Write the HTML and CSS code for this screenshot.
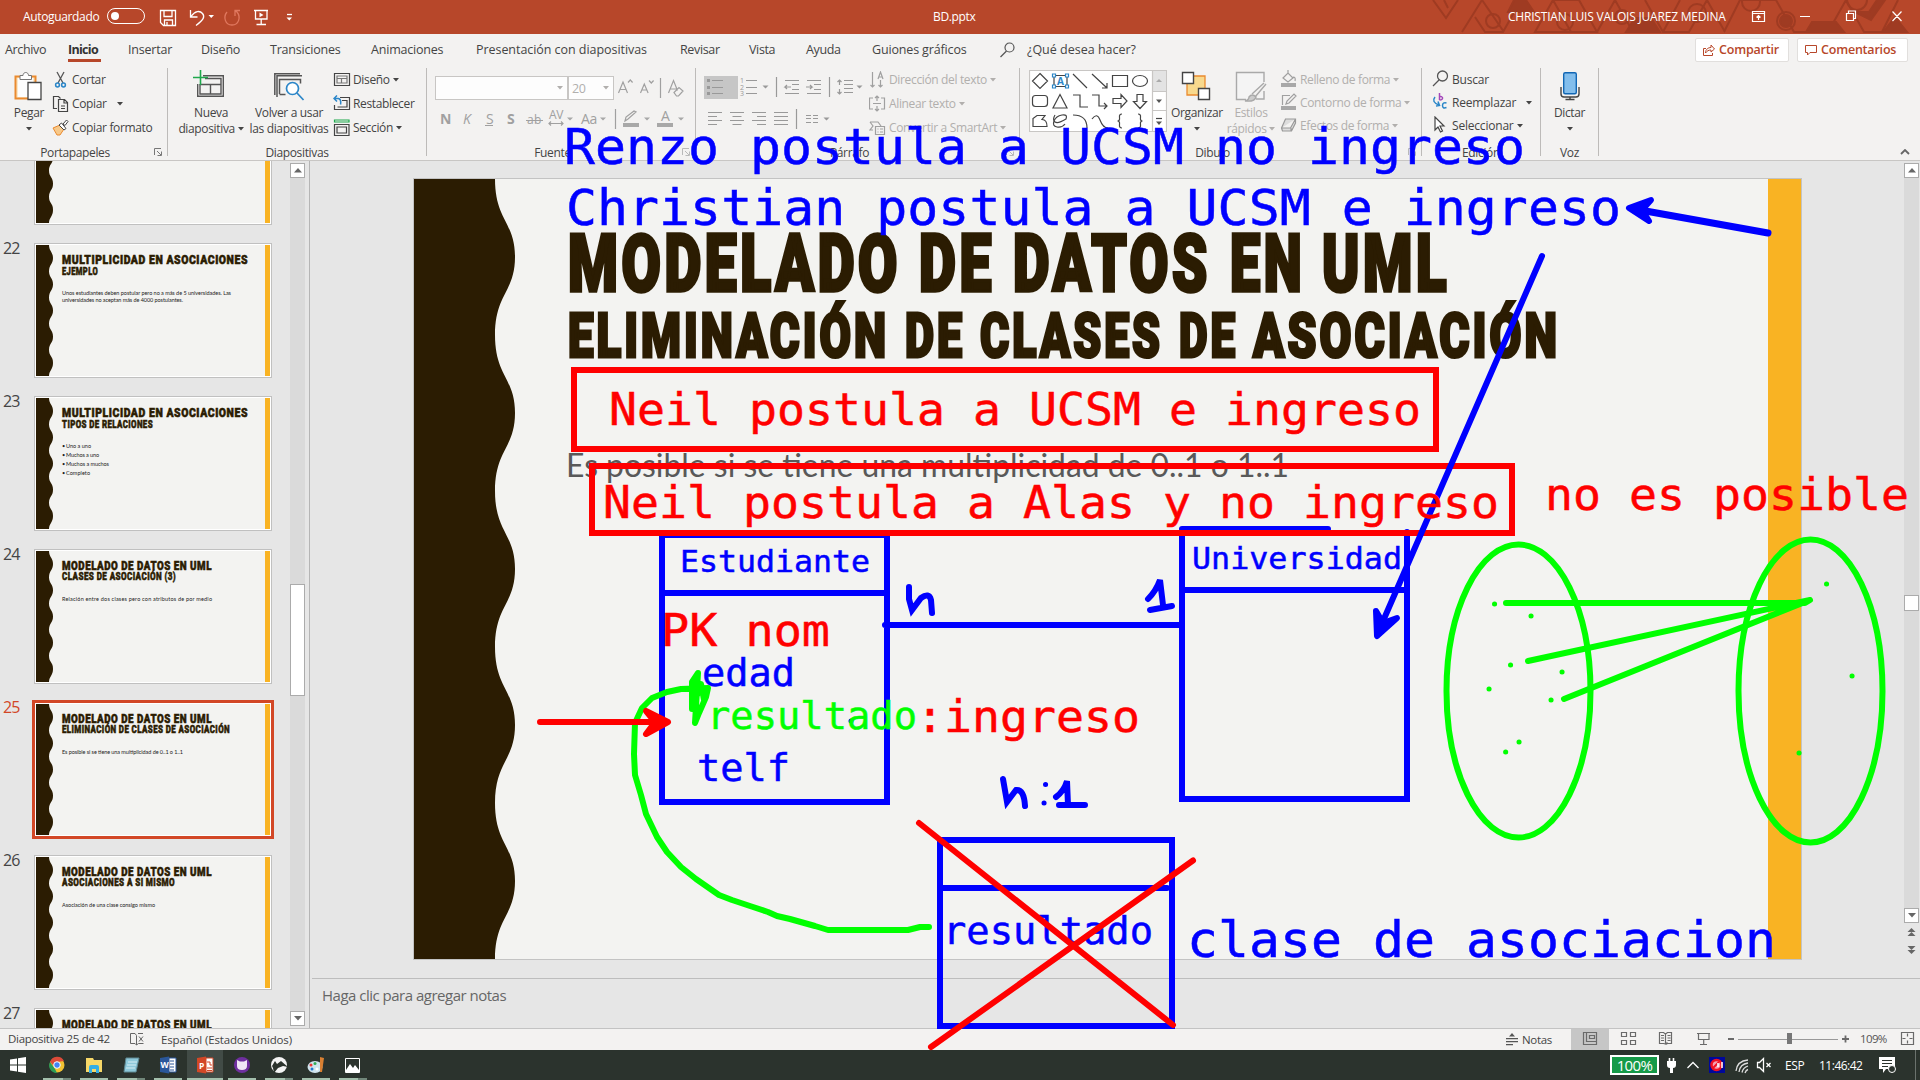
FILE: index.html
```html
<!DOCTYPE html>
<html lang="es">
<head>
<meta charset="utf-8">
<title>BD.pptx</title>
<link rel="stylesheet" href="styles.css">
</head>
<body>
<svg class="defs" width="0" height="0">
  <defs>
    <symbol id="thumb-bg" viewBox="0 0 234 131" preserveAspectRatio="none">
      <rect width="234" height="131" fill="#f3f3f1"/>
      <path d="M0 0H13C13 6 17 7 17 13.1S13 20 13 26.2S17 33 17 39.3S13 46 13 52.4S17 59 17 65.5S13 72 13 78.6S17 85 17 91.7S13 98 13 104.8S17 111 17 117.9S13 125 13 131H0Z" fill="#2b1c02"/>
      <rect x="229" width="5" height="131" fill="#f9b323"/>
    </symbol>
    <symbol id="caret" viewBox="0 0 6 4"><path d="M0 0H6L3 3.5Z" fill="currentColor"/></symbol>
    <symbol id="launch" viewBox="0 0 8 8"><path d="M.5 7V.5H7M3 3L7 7M7.500 3.500V7.500H3.500" fill="none" stroke="currentColor"/></symbol>
  </defs>
</svg>

<div class="app">
  <header class="titlebar">
    <svg class="pattern" width="490" height="34" viewBox="1430 0 490 34" fill="none" stroke="#9f3b22" stroke-width="2">
      <path d="M1433 0l13 18 12-18M1444 0l4 8M1462 32l20-32M1475 17l10 15h18l18-32M1482 0l22 32M1535 32l18-32h26l18 32zM1553 0l18 32M1597 32l18-32 18 32M1645 0l18 32h26l18-32M1663 32l17-32M1707 0l18 32M1740 0l-16 32M1740 0h36l18 32h34l18-32M1846 0l18 32h18l16-32"/>
      <circle cx="1493" cy="21" r="7"/><circle cx="1565" cy="22" r="8"/><circle cx="1622" cy="17" r="7"/><circle cx="1697" cy="13" r="9"/><circle cx="1786" cy="21" r="9"/><circle cx="1751" cy="2" r="9"/><circle cx="1857" cy="0" r="10"/>
      <g fill="#9f3b22"><circle cx="1786" cy="21" r="6"/><path d="M1514 0h12l8 12h-26zM1635 18h16l9 14h-34zM1812 22h24l8 10h-38zM1855 12l14 0 8-12h8l-14 20zM1883 32l12-15 12 15z"/></g>
    </svg>
    <span class="autosave">Autoguardado</span>
    <span class="toggle"></span>
    <svg class="qat" width="150" height="34" viewBox="150 0 150 34" fill="none" stroke="#fff" stroke-width="1.300">
      <path d="M160.500 10.500h15v15h-12l-3-3zM164 10.500v6h8v-6M164.500 25v-5h8v5M167 25v-3"/>
      <path d="M190.500 10v7h7M191 16.500c4-6 9-6 11.500-3s1.500 6-6.500 12"/>
      <path d="M208.500 15h5.500l-2.750 3z" fill="#fff" stroke="none"/>
      <path d="M227 12c-4 5-2 13 5 13s9-8 5-13l-2-1M235 16v-5.500h5" stroke="#e0785f"/>
      <path d="M254 10.500h14M255.500 10.500v8.500h11.500v-8.500M261.200 19v5.500M256.500 24.500h9.500"/>
      <path d="M259.500 12.500l4 2.500-4 2.300zM286.500 17.500h5.500l-2.750 3z" fill="#fff" stroke="none"/><path d="M287 14.500h5"/>
    </svg>
    <span class="doc">BD.pptx</span>
    <span class="user">CHRISTIAN LUIS VALOIS JUAREZ MEDINA</span>
    <svg class="winbtns" width="170" height="34" viewBox="1750 0 170 34" fill="none" stroke="#fff" stroke-width="1.200">
      <path d="M1752.500 11.500h12v10h-12zM1752.500 13.500h12M1758.500 20v-4.500M1756.500 17.500l2-2 2 2M1800 16.500h10M1846.500 13.500h7v7h-7zM1848.500 13v-2h7v7.500h-2M1892.500 11.500l9 9.500M1901.500 11.500l-9 9.500"/>
    </svg>
  </header>

  <nav class="tabs">
    <span>Archivo</span><span class="active">Inicio</span><span>Insertar</span><span>Diseño</span><span>Transiciones</span><span>Animaciones</span><span>Presentación con diapositivas</span><span>Revisar</span><span>Vista</span><span>Ayuda</span><span>Guiones gráficos</span>
    <svg width="27" height="16" viewBox="0 0 27 16" fill="none" stroke="#555" stroke-width="1.200"><circle cx="9.500" cy="5.500" r="4.500"/><path d="M6.500 9L.5 15"/></svg>
    <span class="ask">¿Qué desea hacer?</span>
    <span class="pill share"><svg width="12" height="12" viewBox="0 0 12 12" fill="none" stroke="#b7472a"><path d="M3 4.500H.5v7h9V9M2.500 9c0-4 3-5.500 5.500-5.500V1l3.500 4L8 8V6C5.500 6 4 7 2.500 9z"/></svg>Compartir</span>
    <span class="pill comment"><svg width="12" height="12" viewBox="0 0 12 12" fill="none" stroke="#b7472a"><path d="M.5 1.500h11v7H5l-2.500 2.500V8.500h-2z"/></svg>Comentarios</span>
  </nav>

  <section class="ribbon">
    <div class="group g1">
      <div class="body">
        <div class="big pegar">
          <svg width="28" height="32" viewBox="0 0 28 32" fill="none"><path d="M1.500 6.500h20v22h-20z" fill="#fbe9c9" stroke="#ea8a2f" stroke-width="2"/><path d="M4 8h15v19H4z" fill="#fdfdfd"/><path d="M6 9.500V5.500h3c0-4 5.500-4 5.500 0h3v4z" fill="#fff" stroke="#777"/><path d="M14 12.500h13v17H14z" fill="#fff" stroke="#444" stroke-width="1.300"/></svg>
          <span>Pegar</span><svg class="car" width="6" height="4"><use href="#caret"/></svg>
        </div>
        <div class="rows">
          <div class="row"><svg width="18" height="18" viewBox="0 0 18 18" fill="none" stroke="#555" stroke-width="1.300"><path d="M5 1l6 11M12 1L6 12"/><g stroke="#2b86c8" stroke-width="1.500"><circle cx="5.500" cy="14" r="1.900"/><circle cx="11.500" cy="14" r="1.900"/></g></svg>Cortar</div>
          <div class="row"><svg width="18" height="18" viewBox="0 0 18 18" fill="none" stroke="#444" stroke-width="1.200"><path d="M5 13.500H1.500v-12h5l2 2M6.500 4.500h6l3 3v9h-9zM12 5v3h3M9 11h4M9 13.500h4"/></svg>Copiar<svg class="car far" width="6" height="4"><use href="#caret"/></svg></div>
          <div class="row"><svg width="18" height="18" viewBox="0 0 18 18" fill="none"><path d="M1 9l7-3 4 4-4 6H5z" fill="#f7c98a" stroke="#ea8a2f"/><path d="M7 6l5 5 2-1.500L9.500 4zM11 5l3.500-4 1.500 1.500L13 6.500z" stroke="#444" fill="#fff"/></svg>Copiar formato</div>
        </div>
      </div>
      <div class="label">Portapapeles<svg class="ln" width="8" height="8"><use href="#launch"/></svg></div>
    </div>

    <div class="group g2">
      <div class="body">
        <div class="big nueva">
          <svg width="32" height="32" viewBox="0 0 32 32" fill="none" stroke="#555" stroke-width="1.400"><path d="M10 5.700h20.300v20.600H4.700V14M7 14v10h21V8.500H12M7.500 14.500h20.500M17.500 14.500V24"/><path d="M7.500 0v15M0 7.500h15" stroke="#1ea84c" stroke-width="1.600"/></svg>
          <span>Nueva</span><span>diapositiva <svg width="6" height="4"><use href="#caret"/></svg></span>
        </div>
        <div class="big volver">
          <svg width="32" height="32" viewBox="0 0 32 32" fill="none" stroke="#555" stroke-width="1.500"><path d="M4 25V5.700h25M1.800 25V3.800H27M4 27V8.500M6.500 24V9.500h21v4M6.500 24.500h6"/><circle cx="19.500" cy="18.500" r="6" fill="#fff" stroke="#2b86c8" stroke-width="1.700"/><path d="M24 23l6.500 7" stroke="#2b86c8" stroke-width="1.700"/></svg>
          <span>Volver a usar</span><span>las diapositivas</span>
        </div>
        <div class="rows">
          <div class="row"><svg width="18" height="18" viewBox="0 0 18 18" fill="none" stroke="#444" stroke-width="1.200"><path d="M1.500 2.500h15v12h-15z"/><path d="M4 5h10v7H4zM4 7.500h10M8.500 7.500V12" stroke="#777"/></svg>Diseño <svg class="car" width="6" height="4"><use href="#caret"/></svg></div>
          <div class="row"><svg width="18" height="18" viewBox="0 0 18 18" fill="none" stroke="#444" stroke-width="1.200"><path d="M7 2.500h9.500v12h-15V10M9 5.500h5v6.500H4.500"/><path d="M1 3.500h4.500q3 1 2 6M4 .5l-3 3 3 3" stroke="#2b86c8" stroke-width="1.500"/></svg>Restablecer</div>
          <div class="row"><svg width="18" height="18" viewBox="0 0 18 18" fill="none" stroke="#444" stroke-width="1.200"><path d="M1.500 1h14.500v2H1.500z" stroke="#1ea84c"/><path d="M1.500 5.500h14.500v11H1.500zM4 8h9.500v6H4z"/></svg>Sección <svg class="car" width="6" height="4"><use href="#caret"/></svg></div>
        </div>
      </div>
      <div class="label">Diapositivas</div>
    </div>

    <div class="group g3 dim">
      <div class="body col">
        <div class="line1">
          <span class="combo font"><svg width="6" height="4"><use href="#caret"/></svg></span><span class="combo size">20<svg width="6" height="4"><use href="#caret"/></svg></span>
          <svg width="74" height="26" viewBox="615 74 74 26" fill="none" stroke="#a0a0a0" stroke-width="1.200"><path d="M619.500 92l4.500-11 4.500 11M621 88.500h6M629 81.500l2.300-2.500 2.300 2.500M641.500 92l3.800-9 3.800 9M643 89h5M650 79.500l2.300 2.500 2.300-2.500M661.500 77v20M669.500 92l5-12.500 4 10M671.500 88h6M675 91.500l5-5 4 3.500-4.500 5h-2z"/></svg>
        </div>
        <svg class="line2" width="260" height="26" viewBox="435 106 260 26" fill="none" stroke="#a0a0a0" stroke-width="1.200">
          <g class="glyphs"><text x="440" y="124" font-weight="700">N</text><text x="463" y="124" font-style="italic">K</text><text x="486" y="124">S</text><text x="507" y="124" font-weight="700">S</text><text class="s12" x="527" y="124" textLength="14">ab</text><text class="s12" x="549" y="119" textLength="14">AV</text><text x="581" y="124" textLength="16">Aa</text><text x="661" y="121">A</text></g>
          <path d="M485 125.500h8M526 120.500h17M549 123.500h14M551 121.500l-2 2 2 2M561 121.500l2 2-2 2M615.500 109v20M625 121l3-2 8-7-2-1-8 6z"/>
          <path d="M567 117.500h6l-3 3zM600 117.500h6l-3 3zM644 117.500h6l-3 3zM678 117.500h6l-3 3zM623 123h16v4h-16zM657 123h16v4h-16z" fill="#a8a8a8" stroke="none"/>
        </svg>
      </div>
      <div class="label">Fuente<svg class="ln" width="8" height="8"><use href="#launch"/></svg></div>
    </div>

    <div class="group g4 dim">
      <div class="body">
        <svg width="168" height="64" viewBox="700 70 168 64" fill="none" stroke="#999" stroke-width="1.200">
          <path d="M704 76h34v23h-34z" fill="#c6c6c6" stroke="none"/>
          <path d="M712 80.500h11M712 87.500h11M712 93.500h11M746 80.500h11M746 87.500h11M746 93.500h11M776.500 77v20M785 80.500h14M792 84.500h7M792 89.500h7M785 93.500h14M791 87h-6l2-2m-2 2l2 2M807 80.500h14M814 84.500h7M814 89.500h7M807 93.500h14M806 87h6l-2-2m2 2l-2 2M829.500 77v20M844 80.500h9M844 84.500h9M844 88.500h9M844 92.500h9M839.500 80v5m-2-3l2-2 2 2M839.500 94v-5m-2 3l2 2 2-2"/>
          <path d="M708 112.500h14M708 116.500h9M708 120.500h14M708 124.500h9M730 112.500h14M732.500 116.500h9M730 120.500h14M732.500 124.500h9M752 112.500h14M757 116.500h9M752 120.500h14M757 124.500h9M774 112.500h14M774 116.500h14M774 120.500h14M774 124.500h14M796.500 109v20M806 115.500h5M806 118.500h5M806 122.500h5M813 115.500h5M813 118.500h5M813 122.500h5"/>
          <path d="M707 79h3v3h-3zM707 86h3v3h-3zM707 92h3v3h-3zM762.500 85.500h6l-3 3zM856.500 85.500h6l-3 3zM823.500 117.500h6l-3 3z" fill="#999" stroke="none"/>
          <g class="tiny"><text x="740" y="83">1</text><text x="740" y="90">2</text><text x="740" y="96">3</text></g>
        </svg>
        <div class="rows">
          <div class="row"><svg width="18" height="18" viewBox="0 0 18 18" fill="none" stroke="#a0a0a0" stroke-width="1.200"><path d="M3.500 1v15m-2-2l2 2 2-2M11.500 9v7m-2-2l2 2 2-2M9 8l2.500-7L14 8M10 6h3"/></svg>Dirección del texto <svg class="car" width="6" height="4"><use href="#caret"/></svg></div>
          <div class="row"><svg width="18" height="18" viewBox="0 0 18 18" fill="none" stroke="#a0a0a0" stroke-width="1.200"><path d="M4 3H.500v11H4M12 3h3.500v11H12M4 8.500h8M8 1v5M6 3l2-2 2 2M8 11v5m-2-2l2 2 2-2"/></svg>Alinear texto <svg class="car" width="6" height="4"><use href="#caret"/></svg></div>
          <div class="row"><svg width="18" height="18" viewBox="0 0 18 18" fill="none" stroke="#a0a0a0" stroke-width="1.200"><path d="M1 3h8l3 4M1 3l3 4-3 4h3" /><path d="M6.500 7.500h9v8h-9zM8.500 10h1M11 10h3M8.500 13h1M11 13h3"/></svg>Convertir a SmartArt <svg class="car" width="6" height="4"><use href="#caret"/></svg></div>
        </div>
      </div>
      <div class="label">Párrafo<svg class="ln" width="8" height="8"><use href="#launch"/></svg></div>
    </div>

    <div class="group g5">
      <div class="body">
        <svg class="gallery" width="138" height="63" viewBox="1029 70 138 63" fill="none" stroke="#444" stroke-width="1.200">
          <path d="M1029.500 70.500h137v61h-137z" fill="#fff" stroke="#c8c6c4"/><path d="M1152 71h14v20h-14z" fill="#e3e3e3" stroke="none"/><path d="M1152.500 71v60M1152 91.500h14M1152 110.500h14" stroke="#c8c6c4"/>
          <path d="M1040 73.500l7.500 7.500-7.500 7.500-7.500-7.500zM1073 74l14 14M1092 74l15 14m0-5v5h-5M1112.500 75.500h15v11h-15z"/><ellipse cx="1140" cy="81" rx="7.500" ry="5.500"/>
          <path d="M1054 75.500h13v11h-13z" /><path d="M1052.500 74h3v3h-3zM1065.500 74h3v3h-3zM1052.500 85h3v3h-3zM1065.500 85h3v3h-3z" fill="#fff" stroke="#2b86c8"/><text class="abox" x="1057" y="85">A</text>
          <rect x="1032.500" y="95.500" width="15" height="11" rx="3"/><path d="M1060 94.500l7 13.500h-14zM1073 95h7v12h8M1092 95h7v11h8m-3-3l3 3-3 3M1113 98.500h8v-4l6 6.500-6 6.500v-4h-8zM1137 94.500h6v7h3.500l-6.500 7-6.500-7h3.500z"/>
          <path d="M1033 126.500v-8l4-3h8l-3 4q5 0 5 7zM1055 115q-3 5 0 7t11-3q2-5-4-4t-8 6 3 6 8-3M1073 115q14 0 14 13M1092 119q5-7 8 1t8 8M1122 114q-3 0-2.500 3.500t-2 3.500q2.500 0 2 3.500t2.500 3.500M1138 114q3 0 2.500 3.500t2 3.500q-2.500 0-2 3.500t-2.500 3.500"/>
          <path d="M1156 82l3-3 3 3z" fill="#aaa" stroke="none"/><path d="M1156 99.500h6l-3 3.500zM1156 121.500h6l-3 3.500z" fill="#555" stroke="none"/><path d="M1156 118.500h6"/>
        </svg>
        <div class="big organizar">
          <svg width="30" height="32" viewBox="0 0 30 32"><path d="M6 6h18v19H6z" fill="#f8d98d" stroke="#ea8a2f" stroke-width="1.300"/><path d="M1.500 2.500h11v11h-11zM17.500 18.500h11v11h-11z" fill="#fff" stroke="#444" stroke-width="1.400"/></svg>
          <span>Organizar</span><svg class="car" width="6" height="4"><use href="#caret"/></svg>
        </div>
        <div class="big estilos dimtxt">
          <svg width="32" height="32" viewBox="0 0 32 32" fill="none" stroke="#a9a9a9" stroke-width="1.400"><path d="M29 12V2.500H1.500v27H11M21 29h8v-8" fill="#f4f4f4"/><path d="M29 13L17 24M31 14L20 27M10 31q4-1 4-4 3-4 7 0-1 5-11 4z" fill="#ccc"/></svg>
          <span>Estilos</span><span>rápidos <svg width="6" height="4"><use href="#caret"/></svg></span>
        </div>
        <div class="rows tight dimtxt">
          <div class="row"><svg width="18" height="18" viewBox="0 0 18 18" fill="none" stroke="#a0a0a0" stroke-width="1.200"><path d="M3 8l5-5 5 5-5 4zM8 3V0M13 7q3 0 2 4"/><path d="M1 13h15v4H1z" fill="#a8a8a8" stroke="none"/></svg>Relleno de forma <svg class="car" width="6" height="4"><use href="#caret"/></svg></div>
          <div class="row"><svg width="18" height="18" viewBox="0 0 18 18" fill="none" stroke="#a0a0a0" stroke-width="1.200"><path d="M10 2.500H2.500V12M6 11l1-3 7-7 2 2-7 7z"/><path d="M1 13h15v4H1z" fill="#a8a8a8" stroke="none"/></svg>Contorno de forma <svg class="car" width="6" height="4"><use href="#caret"/></svg></div>
          <div class="row"><svg width="18" height="18" viewBox="0 0 18 18" fill="#ddd" stroke="#999" stroke-width="1.200"><path d="M1.500 12l4-9h10v4l-4 8h-9zM1.500 12h9l5-9M11 12v3"/></svg>Efectos de forma <svg class="car" width="6" height="4"><use href="#caret"/></svg></div>
        </div>
      </div>
      <div class="label">Dibujo<svg class="ln" width="8" height="8"><use href="#launch"/></svg></div>
    </div>

    <div class="group g6">
      <div class="body"><div class="rows tight">
        <div class="row"><svg width="18" height="18" viewBox="0 0 18 18" fill="none" stroke="#555" stroke-width="1.300"><circle cx="10.500" cy="6" r="5"/><path d="M7 10l-6 6"/></svg>Buscar</div>
        <div class="row"><svg width="18" height="18" viewBox="0 0 18 18" fill="none" stroke="#2b86c8" stroke-width="1.500"><path d="M3 4q-4 5 4 8M4 13l3.500-.5L6 8.500M14.500 10q-4-1-4 2.500t4 2"/><path d="M7.500 0v7M7.500 4c3-2 5 3 0 3" stroke="#a347ba"/></svg>Reemplazar<svg class="car far" width="6" height="4"><use href="#caret"/></svg></div>
        <div class="row"><svg width="18" height="18" viewBox="0 0 18 18" fill="#fff" stroke="#444" stroke-width="1.200"><path d="M3 1v13l3-3 2.500 5 2-1-2.500-5h4z"/></svg>Seleccionar <svg class="car" width="6" height="4"><use href="#caret"/></svg></div>
      </div></div>
      <div class="label">Edición</div>
    </div>

    <div class="group g7">
      <div class="body"><div class="big dictar">
        <svg width="22" height="32" viewBox="0 0 22 32" fill="none" stroke="#444" stroke-width="1.400"><rect x="4.700" y="2.700" width="12.600" height="21" rx="1.500" fill="#83beec" stroke="#1267b4"/><path d="M2 17v7q0 3 3 3h12q3 0 3-3v-7M11 27v3M6.500 29.500h9"/></svg>
        <span>Dictar</span><svg class="car" width="6" height="4"><use href="#caret"/></svg>
      </div></div>
      <div class="label">Voz</div>
    </div>
    <svg class="collapse" width="10" height="6" viewBox="0 0 10 6" fill="none" stroke="#666" stroke-width="1.800"><path d="M1 5l4-4 4 4"/></svg>
  </section>

  <main class="work">
    <aside class="thumbs">
      <div class="list">
        <div class="item"><span class="num"></span><svg class="th" width="234" height="131"><use href="#thumb-bg" width="234" height="131"/></svg></div>
        <div class="item"><span class="num">22</span><svg class="th" width="234" height="131"><use href="#thumb-bg" width="234" height="131"/><text class="t1" x="26" y="19" textLength="186" lengthAdjust="spacingAndGlyphs">MULTIPLICIDAD EN ASOCIACIONES</text><text class="t2" x="26" y="30" textLength="36" lengthAdjust="spacingAndGlyphs">EJEMPLO</text><text class="t3" x="26" y="50" textLength="169">Unos estudiantes deben postular pero no a más de 5 universidades. Las</text><text class="t3" x="26" y="57" textLength="121">universidades no aceptan más de 4000 postulantes.</text></svg></div>
        <div class="item"><span class="num">23</span><svg class="th" width="234" height="131"><use href="#thumb-bg" width="234" height="131"/><text class="t1" x="26" y="19" textLength="186" lengthAdjust="spacingAndGlyphs">MULTIPLICIDAD EN ASOCIACIONES</text><text class="t2" x="26" y="30" textLength="91" lengthAdjust="spacingAndGlyphs">TIPOS DE RELACIONES</text><g class="t3"><text x="26" y="50">•</text><text x="30" y="50" textLength="25">Uno a uno</text><text x="26" y="59">•</text><text x="30" y="59" textLength="33">Muchos a uno</text><text x="26" y="68">•</text><text x="30" y="68" textLength="43">Muchos a muchos</text><text x="26" y="77">•</text><text x="30" y="77" textLength="24">Completo</text></g></svg></div>
        <div class="item"><span class="num">24</span><svg class="th" width="234" height="131"><use href="#thumb-bg" width="234" height="131"/><text class="t1" x="26" y="19" textLength="150" lengthAdjust="spacingAndGlyphs">MODELADO DE DATOS EN UML</text><text class="t2" x="26" y="29" textLength="114" lengthAdjust="spacingAndGlyphs">CLASES DE ASOCIACIÓN (3)</text><text class="t3" x="26" y="50" textLength="150">Relación entre dos clases pero con atributos de por medio</text></svg></div>
        <div class="item sel"><span class="num">25</span><svg class="th" width="234" height="131"><use href="#thumb-bg" width="234" height="131"/><text class="t1" x="26" y="19" textLength="150" lengthAdjust="spacingAndGlyphs">MODELADO DE DATOS EN UML</text><text class="t2" x="26" y="29" textLength="168" lengthAdjust="spacingAndGlyphs">ELIMINACIÓN DE CLASES DE ASOCIACIÓN</text><text class="t3" x="26" y="50" textLength="121">Es posible si se tiene una multiplicidad de 0..1 o 1..1</text></svg></div>
        <div class="item"><span class="num">26</span><svg class="th" width="234" height="131"><use href="#thumb-bg" width="234" height="131"/><text class="t1" x="26" y="19" textLength="150" lengthAdjust="spacingAndGlyphs">MODELADO DE DATOS EN UML</text><text class="t2" x="26" y="29" textLength="113" lengthAdjust="spacingAndGlyphs">ASOCIACIONES A SI MISMO</text><text class="t3" x="26" y="50" textLength="93">Asociación de una clase consigo mismo</text></svg></div>
        <div class="item"><span class="num">27</span><svg class="th" width="234" height="131"><use href="#thumb-bg" width="234" height="131"/><text class="t1" x="26" y="19" textLength="150" lengthAdjust="spacingAndGlyphs">MODELADO DE DATOS EN UML</text></svg></div>
      </div>
      <div class="scroll left"><i class="btn"><svg width="8" height="5" viewBox="0 0 8 5"><path d="M0 4.500h8L4 0z" fill="#666"/></svg></i><i class="track a"></i><i class="knob"></i><i class="track b"></i><i class="btn"><svg width="8" height="5" viewBox="0 0 8 5"><path d="M0 0h8L4 4.500z" fill="#666"/></svg></i></div>
    </aside>
    <div class="editor">
      <div class="stage">
        <svg class="slide" width="1389" height="782" viewBox="413 178 1389 782">
          <rect x="413.500" y="178.500" width="1388" height="781" fill="#f3f3f1" stroke="#c3c3c3"/>
          <path d="M414 179H495C495 220 515 222 515 257S495 294 495 335S515 378 515 413S495 450 495 491S515 534 515 569S495 606 495 647S515 690 515 725S495 762 495 803S515 846 515 881S495 918 495 959H414Z" fill="#2b1c02"/>
          <rect x="1768" y="179" width="33" height="780" fill="#f9b323"/>
          <g class="h1"><text x="568" y="290.500" textLength="333" lengthAdjust="spacingAndGlyphs">MODELADO</text><text x="919" y="290.500" textLength="76" lengthAdjust="spacingAndGlyphs">DE</text><text x="1013" y="290.500" textLength="198" lengthAdjust="spacingAndGlyphs">DATOS</text><text x="1230" y="290.500" textLength="75" lengthAdjust="spacingAndGlyphs">EN</text><text x="1322" y="290.500" textLength="128" lengthAdjust="spacingAndGlyphs">UML</text></g>
          <g class="h2"><text x="568" y="356.800" textLength="321" lengthAdjust="spacingAndGlyphs">ELIMINACIÓN</text><text x="905" y="356.800" textLength="60" lengthAdjust="spacingAndGlyphs">DE</text><text x="980" y="356.800" textLength="183" lengthAdjust="spacingAndGlyphs">CLASES</text><text x="1179" y="356.800" textLength="59" lengthAdjust="spacingAndGlyphs">DE</text><text x="1253" y="356.800" textLength="307" lengthAdjust="spacingAndGlyphs">ASOCIACIÓN</text></g>
          <text class="h3" x="566" y="477" textLength="723" lengthAdjust="spacingAndGlyphs">Es posible si se tiene una multiplicidad de 0..1 o 1..1</text>
        </svg>
        <div class="scroll right"><i class="btn"><svg width="8" height="5" viewBox="0 0 8 5"><path d="M0 4.500h8L4 0z" fill="#666"/></svg></i><i class="track a"></i><i class="knob"></i><i class="track b"></i><i class="btn"><svg width="8" height="5" viewBox="0 0 8 5"><path d="M0 0h8L4 4.500z" fill="#666"/></svg></i><svg class="pages" width="15" height="38" viewBox="0 0 15 38" fill="#666"><path d="M3.500 9h8l-4-4zM3.500 13h8l-4-4zM3.500 23h8l-4 4zM3.500 27h8l-4 4z"/></svg></div>
      </div>
      <div class="notes">Haga clic para agregar notas</div>
    </div>
  </main>

  <footer class="status">
    <span class="s1">Diapositiva 25 de 42</span>
    <svg class="book" width="15" height="14" viewBox="0 0 15 14" fill="none" stroke="#666"><path d="M6.500 12L5 10.500H.5V.5H5l1.500 2V12l2-1.500h5M8 .5h5M9 3.500l4 5M13 3.500l-4 5"/></svg>
    <span class="s2">Español (Estados Unidos)</span>
    <svg class="ni" width="12" height="13" viewBox="0 0 12 13"><path d="M3 3.500L6 0l3 3.500zM0 5h12v1.200H0zM0 8h12v1.200H0zM0 11h7v1.200H0z" fill="#555"/></svg>
    <span class="s3">Notas</span>
    <svg width="349" height="21" viewBox="1571 1029 349 21" fill="none" stroke="#6a6a6a" stroke-width="1.200">
      <path d="M1571 1029h38v21h-38z" fill="#c6c6c6" stroke="none"/><path d="M1583.500 1032.500h13v12h-13zM1586.500 1032.500v9h10M1589.500 1035.500h5v3h-5z"/>
      <path d="M1621.500 1032.500h5v4h-5zM1630.500 1032.500h5v4h-5zM1621.500 1040.500h5v4h-5zM1630.500 1040.500h5v4h-5zM1665.500 1044v-10l-2-1.500h-4v11h4zl2-1.500M1665.500 1034l2-1.500h4v11h-4l-2 1M1661 1035.500h3M1661 1038h3M1661 1040.500h3M1667.500 1035.500h3M1667.500 1038h3M1667.500 1040.500h3M1697 1033.500h13M1698.500 1034v5.500h10.500v-5.500M1703.700 1040v4M1700 1044.500h7"/>
      <path d="M1728 1039h6M1842 1039h7M1845.500 1035.500v7" stroke-width="1.800"/><path d="M1738 1039.500h100" stroke="#999"/><path d="M1787 1033h5v11h-5z" fill="#777" stroke="none"/>
      <text class="zoom" x="1860" y="1043" textLength="27">109%</text>
      <path d="M1901.500 1032.500h12v12h-12zM1907.500 1033.500v3M1907.500 1040.500v3M1902.500 1038.500h3M1909.500 1038.500h3"/>
    </svg>
  </footer>

  <footer class="taskbar">
    <svg width="370" height="30" viewBox="0 1050 370 30">
      <path d="M187 1050h36v30h-36z" fill="#414b46"/>
      <path d="M10 1059.500l7-1v6h-7zM18 1058.300l8-1.300v7.500h-8zM10 1065.500h7v6l-7-1zM18 1065.500h8v7.500l-8-1.300z" fill="#fff"/>
      <circle cx="57" cy="1065" r="7.500" fill="#f1c232"/><path d="M50 1062a7.500 7.500 0 0 1 14-1l-7 1-3 4z" fill="#dd4b39"/><path d="M50 1062l5 7 2 4a7.500 7.500 0 0 1-7-11" fill="#2a9d57"/><circle cx="57" cy="1065" r="3.300" fill="#4285f4" stroke="#fff"/>
      <path d="M86 1058h7l1 2h8v12H86z" fill="#f6d868"/><path d="M89 1073v-6q0-2 2-2h6q2 0 2 2v6h-3v-4h-4v4z" fill="#32aee6"/>
      <path d="M126 1058h13l-3 14h-12z" fill="#8ec9da" stroke="#5f8a94"/><path d="M128 1062h9M127 1065h9M126 1068h9" stroke="#d6eef4"/>
      <path d="M169 1058h7v14h-7z" fill="#fff" stroke="#2a579a"/><path d="M170 1061h4M170 1064h4M170 1067h4M170 1070h4" stroke="#2a579a"/><path d="M160 1058l9-1.500v17l-9-1.500z" fill="#2a579a"/><text class="wp" x="160.500" y="1068">W</text>
      <path d="M206 1058h7v14h-7z" fill="#fff" stroke="#d24726"/><path d="M207 1062h3v3h2M207 1068h5M207 1070.500h5" stroke="#d24726" fill="none"/><path d="M197 1058l9-1.500v17l-9-1.500z" fill="#d24726"/><text class="wp" x="199" y="1068.500">P</text>
      <circle cx="242" cy="1065" r="8" fill="#6e2f9e"/><path d="M237 1060l3 1.500h4l3-1.500v6q0 4-5 4t-5-4z" fill="#efe6f5"/>
      <circle cx="279" cy="1065" r="8" fill="#f4f4f4"/><path d="M272 1066l3-5 2 3 4-3 7 6-5-1-5 2-4 5-1-5z" fill="#2b332d"/>
      <ellipse cx="315" cy="1067" rx="7.500" ry="6" fill="#cfe4ee"/><g><circle cx="311" cy="1065" r="1.500" fill="#e33"/><circle cx="315" cy="1063.500" r="1.500" fill="#3a5"/><circle cx="312" cy="1069" r="1.500" fill="#27c"/><circle cx="317" cy="1069" r="1.500" fill="#fff"/></g><path d="M320 1057l4 1-2 14h-2z" fill="#d98032"/>
      <path d="M345.500 1058.500h14v14h-14z" fill="#2b332d" stroke="#fff"/><path d="M346 1070l4-6 3 4 2-3 4 5v2h-13z" fill="#fff"/>
      <path d="M43 1078h28v2H43zM80 1078h28v2H80zM117 1078h28v2h-28zM154 1078h28v2h-28zM187 1078h36v2h-36zM228 1078h28v2h-28zM265 1078h28v2h-28zM302 1078h28v2h-28zM339 1078h28v2h-28z" fill="#a3bfac"/>
      <path d="M63 1078h8v2h-8zM137 1078h8v2h-8zM285 1078h8v2h-8zM358 1078h9v2h-9z" fill="#71877a"/>
    </svg>
    <div class="tray">
      <span class="battery">100%</span>
      <svg width="120" height="30" viewBox="1663 1050 120 30" fill="none" stroke="#fff" stroke-width="1.300">
        <path d="M1669.500 1058v3M1673.500 1058v3" stroke-width="1.600"/><path d="M1667 1061h9v4q0 3-3 3v5h-3v-5q-3 0-3-3z" fill="#fff" stroke="none"/>
        <path d="M1687.500 1068l5.500-5.500 5.500 5.500"/>
        <path d="M1709 1057h16v16h-16z" fill="#00089b" stroke="none"/><circle cx="1716.500" cy="1065" r="5" fill="#f4a0b0" stroke="#f01020" stroke-width="2.500"/><path d="M1713 1068l6-6" stroke="#f01020" stroke-width="2"/><path d="M1718 1067v-4M1722 1062v6" stroke-width="1.500"/>
        <path d="M1736 1071q1-10 12-11M1739 1072q1-8 9-9M1742 1072.500q1-5 6-6.500M1745 1073q1-3 3-3.500" stroke="#ddd"/>
        <path d="M1757.500 1062.500h2l4-4v13l-4-4h-2zM1766.500 1063l4 4M1770.500 1063l-4 4"/>
      </svg>
      <span class="lang">ESP</span><span class="time">11:46:42</span>
      <svg width="42" height="30" viewBox="1878 1050 42 30"><path d="M1879 1057h16v12h-9l-3 4v-4h-4z" fill="#fff"/><path d="M1882 1060.500h10M1882 1063.500h10M1882 1066.500h6" stroke="#2b332d"/><circle cx="1892" cy="1069" r="3.500" fill="#2b332d" stroke="#fff"/><path d="M1915.500 1050v30" stroke="#6b726d"/></svg>
    </div>
  </footer>
</div>

<svg class="ink" width="1920" height="1080" viewBox="0 0 1920 1080">
  <g class="blue">
    <path d="M662 535h225v267H662zM664 593h220M885 625h297M1182 532v267h225V532M1182 529h146M1185 590h219M940 840h232v186H940zM941 888h226"/>
  </g>
  <g class="red"><path d="M574 370h862v79H574zM592 466h920v67H592z"/></g>
  <g class="blue">
    <path d="M909 587l0 12 3 11 9-12q8-6 10 2l1 13M1148 599q8-8 12-19l3 25M1150 610l22-4M1003 779l4 23 9-12q8-1 9 16M1056 797q8-6 11-16l1 24M1059 805h26"/>
    <path d="M1045.500 784.500h.1M1044 803h.1M851 721h.1" stroke-width="5"/>
    <path d="M1768 233L1640 210" stroke-width="7"/><path d="M1629 208L1651 200 1642 210 1649 221Z" class="fill"/>
    <path d="M1542 256L1380 628"/><path d="M1377 636L1376 611 1383 623 1397 618Z" class="fill"/>
  </g>
  <g class="txt b">
    <text class="xl" x="564" y="164" textLength="961" lengthAdjust="spacingAndGlyphs">Renzo postula a UCSM no ingreso</text>
    <text class="xl" x="566" y="225" textLength="1055" lengthAdjust="spacingAndGlyphs">Christian postula a UCSM e ingreso</text>
    <text class="sm" x="680" y="571.500" textLength="190" lengthAdjust="spacingAndGlyphs">Estudiante</text>
    <text class="sm" x="1192" y="568.500" textLength="210" lengthAdjust="spacingAndGlyphs">Universidad</text>
    <text class="md" x="702" y="685.500" textLength="93" lengthAdjust="spacingAndGlyphs">edad</text>
    <text class="md" x="697" y="780.500" textLength="93" lengthAdjust="spacingAndGlyphs">telf</text>
    <text class="md" x="943" y="943.500" textLength="210" lengthAdjust="spacingAndGlyphs">resultado</text>
    <text class="xl" x="1187" y="956.500" textLength="589" lengthAdjust="spacingAndGlyphs">clase de asociacion</text>
  </g>
  <g class="txt r">
    <text class="lg" x="609" y="425" textLength="812" lengthAdjust="spacingAndGlyphs">Neil postula a UCSM e ingreso</text>
    <text class="lg" x="603" y="518" textLength="896" lengthAdjust="spacingAndGlyphs">Neil postula a Alas y no ingreso</text>
    <text class="lg" x="1545" y="510" textLength="364" lengthAdjust="spacingAndGlyphs">no es posible</text>
    <text class="lg" x="661" y="646" textLength="169" lengthAdjust="spacingAndGlyphs">PK nom</text>
    <text class="lg" x="916" y="732" textLength="224" lengthAdjust="spacingAndGlyphs">:ingreso</text>
  </g>
  <text class="txt g md" x="707" y="728.500" textLength="210" lengthAdjust="spacingAndGlyphs">resultado</text>
  <g class="green">
    <path d="M929 927L920 927 908 930H828L815 926 790 919 777 916 768 912 750 906 732 900 719 895 696 879 681 867 667 852 657 837 646 814 641 795 635 775 634 754 635 723 642 708 652 698 667 692 681 689 708 688L706 697 699 713 695 723 698 673 692 682V709L701 684 704 700"/>
    <ellipse cx="1518.500" cy="691" rx="72" ry="146.500"/><ellipse cx="1810.500" cy="691" rx="72" ry="151.500"/>
    <path d="M1506 603H1805L1810 600L1528 661M1810 600L1564 699"/>
    <path stroke-width="5" d="M1494.500 604h.1M1531 616h.1M1510.500 665h.1M1562 672h.1M1489 689h.1M1551 700h.1M1519 742h.1M1505.600 752h.1M1826.500 584h.1M1852 676h.1M1799 753h.1"/>
  </g>
  <g class="red">
    <path d="M919 823L1173 1025M1193 860.500L931 1047M540 722H655"/><path class="fill" d="M668 722L646 711 655 722 646 734Z"/>
  </g>
</svg>
</body>
</html>
```

FILE: styles.css
```css
* { box-sizing: border-box; }
body { margin: 0; width: 1920px; height: 1080px; overflow: hidden; position: relative; font: 12px "Open Sans", "Noto Sans", sans-serif; color: #444; letter-spacing: -0.35px; background: #e6e6e6; }
svg { flex: none; }
.defs { position: absolute; }
.app { display: flex; flex-direction: column; height: 1080px; }

/* title bar */
.titlebar { position: relative; height: 34px; background: #b7472a; color: #fff; display: flex; align-items: center; flex: none; white-space: nowrap; }
.pattern { position: absolute; right: 0; top: 0; }
.titlebar > *:not(.pattern) { z-index: 1; }
.autosave { width: 107px; padding-left: 23px; padding-bottom: 1px; }
.toggle { width: 38px; height: 16px; border: 1.5px solid #fff; border-radius: 8px; margin: 0 5px 2px 0; }
.toggle::before { content: ""; display: block; width: 8px; height: 8px; border-radius: 4px; background: #fff; margin: 2.5px 3px; }
.doc { width: 1208px; padding-left: 633px; padding-bottom: 2px; }
.user { width: 242px; letter-spacing: -0.2px; padding-bottom: 1px; }

/* tabs */
.tabs { height: 34px; background: #f3f2f1; display: flex; align-items: center; flex: none; white-space: nowrap; padding: 0 0 3px 5px; font-size: 12.500px; }
.tabs > span { flex: none; }
.tabs > span:nth-of-type(1) { width: 63px; }
.tabs > span:nth-of-type(2) { width: 60px; }
.tabs > span:nth-of-type(3) { width: 73px; }
.tabs > span:nth-of-type(4) { width: 69px; }
.tabs > span:nth-of-type(5) { width: 101px; }
.tabs > span:nth-of-type(6) { width: 105px; }
.tabs > span:nth-of-type(7) { width: 204px; letter-spacing: -0.05px; }
.tabs > span:nth-of-type(8) { width: 69px; }
.tabs > span:nth-of-type(9) { width: 57px; }
.tabs > span:nth-of-type(10) { width: 66px; }
.tabs > span:nth-of-type(11) { width: 128px; letter-spacing: -0.15px; }
.tabs > span:nth-of-type(n+3):nth-of-type(-n+6) { letter-spacing: -0.2px; }
.tabs > .ask { width: 668px; letter-spacing: 0; }
.tabs .active { font-weight: 700; letter-spacing: -0.7px; position: relative; color: #333; }
.tabs .active::after { content: ""; position: absolute; left: 0; top: 18px; width: 33px; height: 3px; background: #b7472a; }
.tabs .pill { height: 24px; border: 1px solid #e1dfdd; border-radius: 2px; background: #fff; color: #b7472a; font-weight: 600; display: flex; align-items: center; gap: 4px; padding-left: 7px; letter-spacing: -0.2px; }
.tabs .share { width: 94px; margin-right: 8px; }
.tabs .comment { width: 111px; }

/* ribbon */
.ribbon { height: 93px; background: #f3f2f1; border-bottom: 1px solid #c8c6c4; display: flex; flex: none; position: relative; white-space: nowrap; }
.group { height: 88px; border-right: 1px solid #bdbbb9; display: flex; flex-direction: column; flex: none; }
.body { height: 74px; display: flex; flex: none; }
.body.col { flex-direction: column; }
.label { text-align: center; line-height: 21px; position: relative; color: #444; }
.ln { position: absolute; right: 5px; top: 6px; color: #777; }
.g1 { width: 168px; } .g2 { width: 259px; } .g3 { width: 269px; } .g4 { width: 324px; } .g5 { width: 402px; } .g6 { width: 119px; } .g7 { width: 58px; }
.g1 .label { padding-right: 17px; } .g3 .label { padding-right: 17px; } .g4 .label { padding-right: 16px; } .g5 .label { padding-right: 16px; }
.big { display: flex; flex-direction: column; align-items: center; flex: none; padding-top: 2px; line-height: 16px; }
.big > svg:first-child { margin-bottom: 3px; }
.big .car { margin-top: 6px; }
.big span svg { vertical-align: 2px; }
.pegar { width: 52px; padding-left: 6px; }
.pegar > svg:first-child { transform: translateX(-1px); }
.rows { display: flex; flex-direction: column; }
.row { height: 24px; display: flex; align-items: center; padding-bottom: 1px; }
.row > svg:first-child { margin-right: 2px; }
.row .car { margin-left: 3px; margin-top: 1px; }
.row .far { margin-left: 10px; }
.tight .row { height: 23px; }
.nueva { width: 76px; padding-left: 10px; } .volver { width: 84px; padding-left: 6px; }
.nueva > svg:first-child { margin-right: 4px; }
.g2 .rows { padding-left: 5px; }
.dim, .dimtxt { color: #b1afad; }
.dim .ln, .g5 .ln { color: #b9b9b9; }
.g3 .body { padding: 6px 0 0 8px; }
.line1 { display: flex; height: 28px; align-items: center; }
.combo { height: 24px; border: 1px solid #c8c6c4; background: #fdfdfd; display: flex; align-items: center; justify-content: space-between; padding: 0 4px 0 3px; }
.combo.font { width: 133px; justify-content: flex-end; }
.combo.size { width: 46px; border-left-width: 1px; font-size: 12.500px; }
.line2 { margin-top: 4px; }
.glyphs text { fill: #a0a0a0; stroke: none; font-size: 14px; }
.glyphs .s12 { font-size: 12px; }
.tiny text { fill: #999; stroke: none; font-size: 7px; }
.g4 .body { padding-left: 4px; }
.g4 .body > svg { margin-top: 2px; }
.g4 .rows { padding-left: 1px; }
.gallery { margin: 2px 0 0 9px; }
.abox { fill: #2b86c8; stroke: none; font-size: 10px; font-weight: 700; }
.organizar { width: 60px; } .estilos { width: 48px; }
.g5 .rows { padding-left: 5px; }
.g6 .rows { padding-left: 10px; letter-spacing: -0.2px; }
.dictar { width: 57px; }
.organizar > svg:first-child { margin-right: 2px; }
.collapse { position: absolute; right: 10px; bottom: 5px; }

/* work area */
.work { flex: 1; display: flex; min-height: 0; }
.thumbs { width: 310px; display: flex; overflow: hidden; flex: none; height: 867px; border-right: 1px solid #b5b5b5; }
.list { width: 290px; display: flex; flex-direction: column; gap: 18px; margin-top: -71px; flex: none; }
.item { display: flex; height: 135px; flex: none; }
.num { width: 34px; padding-left: 3px; line-height: 11px; font-size: 16px; letter-spacing: -0.8px; }
.th { display: block; border: 1px solid #c0c0c0; padding: 1px; background: #fff; width: 238px; height: 135px; }
.sel .th { outline: 3px solid #d24726; outline-offset: -1px; border-color: #d24726; }
.sel .num { color: #d24726; }
.t1 { font: 900 13px Roboto; letter-spacing: 0.7px; fill: #2b1c02; stroke: #2b1c02; stroke-width: 0.6px; }
.t2 { font: 900 10.500px Roboto; letter-spacing: 0.5px; fill: #2b1c02; stroke: #2b1c02; stroke-width: 0.5px; }
.t3 { font: 5.500px Lato; letter-spacing: 0; fill: #222; }
.scroll { width: 15px; display: flex; flex-direction: column; flex: none; }
.btn { width: 15px; height: 15px; background: #fff; border: 1px solid #ababab; display: flex; align-items: center; justify-content: center; flex: none; }
.track { background: #dadada; flex: none; }
.knob { background: #fff; border: 1px solid #ababab; flex: none; }
.left { margin-top: 2px; }
.left .a { height: 406px; } .left .knob { height: 112px; } .left .b { height: 315px; }
.editor { flex: 1; display: flex; flex-direction: column; }
.stage { height: 818px; display: flex; justify-content: space-between; border-bottom: 1px solid #bdbdbd; margin-left: 2px; padding: 2px 1px 0 101px; }
.slide { margin-top: 15px; }
.right .a { height: 417px; } .right .knob { height: 16px; } .right .b { height: 297px; }
.notes { height: 49px; padding: 6px 0 0 12px; font-size: 15px; line-height: 20px; color: #666; letter-spacing: -0.5px; }
.h1, .h2 { font-family: Roboto; font-weight: 900; fill: #2b1c02; stroke: #2b1c02; }
.h1 { font-size: 79px; stroke-width: 3.500px; letter-spacing: 5px; } .h2 { font-size: 61px; stroke-width: 3px; letter-spacing: 4px; }
.h3 { font: 32px Lato; letter-spacing: 0; fill: #595959; }

/* status bar */
.status { height: 22px; background: #f3f2f1; border-top: 1px solid #c3c3c3; display: flex; align-items: center; flex: none; white-space: nowrap; font-size: 11.500px; }
.s1 { width: 130px; padding: 0 0 2px 8px; letter-spacing: -0.3px; }
.book { margin-right: 16px; }
.s2 { width: 1345px; letter-spacing: -0.15px; }
.ni { margin-right: 4px; }
.s3 { width: 49px; }
.zoom { fill: #555; stroke: none; font-size: 11.500px; }

/* taskbar */
.taskbar { height: 30px; background: #2b332d; display: flex; justify-content: space-between; flex: none; color: #fff; }
.wp { fill: #fff; font: 700 8.500px "Open Sans"; letter-spacing: 0; }
.tray { display: flex; align-items: center; width: 310px; flex: none; }
.battery { width: 49px; height: 20px; background: #159a48; border: 2px solid #fff; text-align: center; font-size: 15px; line-height: 16px; margin-right: 4px; letter-spacing: -0.6px; }
.lang { width: 36px; padding-left: 2px; }
.time { width: 59px; letter-spacing: -0.5px; }

/* freehand annotations over the screen */
.ink { position: absolute; left: 0; top: 0; }
.ink g { stroke-width: 6; stroke-linecap: round; fill: none; }
.ink .blue { stroke: #00f; } .ink .red { stroke: #f00; } .ink .green { stroke: #0f0; stroke-linejoin: round; }
.blue .fill { fill: #00f; stroke-linejoin: round; } .red .fill { fill: #f00; stroke-linejoin: round; }
.ink text { font-family: "DejaVu Sans Mono", monospace; letter-spacing: 0; stroke-width: 0.5px; }
.ink .b { fill: #00f; stroke: #00f; } .ink .r { fill: #f00; stroke: #f00; } .ink .g { fill: #0f0; stroke: #0f0; }
.xl { font-size: 49px; } .lg { font-size: 45px; } .md { font-size: 36.500px; } .sm { font-size: 30px; }
```
